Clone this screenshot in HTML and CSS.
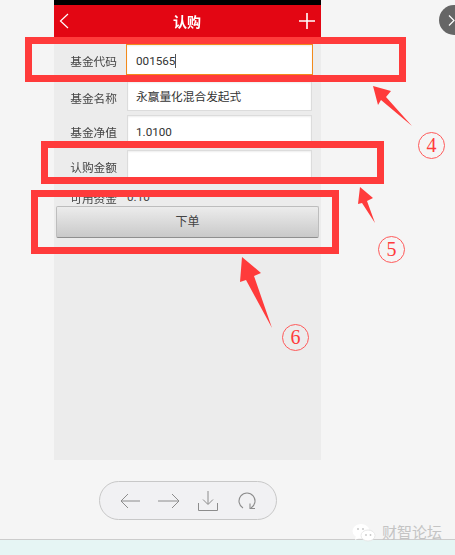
FILE: index.html
```html
<!DOCTYPE html>
<html lang="zh">
<head>
<meta charset="utf-8">
<title>认购</title>
<link rel="stylesheet" href="styles.css">
</head>
<body>
<main class="phone">
  <header class="topbar">
    <span class="bar-icon"><svg width="10" height="16" viewBox="0 0 10 16"><path d="M9 1L1.500 8L9 15" fill="none" stroke="#fff" stroke-width="1.200"/></svg></span>
    <h1 class="title">认购</h1>
    <span class="bar-icon"><svg width="16" height="16" viewBox="0 0 16 16"><path d="M8 0V16M0 8H16" stroke="#fff" stroke-width="1.600"/></svg></span>
  </header>
  <form class="form">
    <div class="row first"><span class="label">基金代码</span><div class="field focus">001565<i class="caret"></i></div></div>
    <div class="row"><span class="label">基金名称</span><div class="field short">永赢量化混合发起式</div></div>
    <div class="row"><span class="label">基金净值</span><div class="field">1.0100</div></div>
    <div class="row"><span class="label">认购金额</span><div class="field"></div></div>
    <div class="row plain"><span class="label">可用资金</span><span class="value">0.10</span></div>
    <div class="submit">下单</div>
  </form>
</main>

<div class="toolbar">
  <svg width="20" height="18" viewBox="0 0 20 18"><path d="M20 9H1M8 2L1 9L8 16" fill="none" stroke="#8c8c8c" stroke-width="1"/></svg>
  <svg width="22" height="18" viewBox="0 0 22 18"><path d="M0 9H21M14 2L21 9L14 16" fill="none" stroke="#8c8c8c" stroke-width="1"/></svg>
  <svg width="20" height="20" viewBox="0 0 20 20"><path d="M10 0V13M5 8.500L10 13.500L15 8.500M.5 12V19.500H19.500V12" fill="none" stroke="#8c8c8c" stroke-width="1"/></svg>
  <svg class="reload" width="18" height="18" viewBox="0 0 18 18"><path d="M13 16A8 8 0 1 0 5 16M12 11.500V16.500H17" fill="none" stroke="#8c8c8c" stroke-width="1.100"/></svg>
</div>

<div class="bottom-strip"></div>
<div class="watermark">
  <svg width="24" height="20" viewBox="0 0 24 20"><ellipse cx="9" cy="8" rx="8.500" ry="7" fill="#fff"/><path d="M4 12L3 17L9 14Z" fill="#fff"/><ellipse cx="16" cy="12.500" rx="7" ry="5.500" fill="#fff" stroke="#e2e2e2" stroke-width=".8"/><circle cx="6" cy="6" r="1" fill="#c8c8c8"/><circle cx="11" cy="6" r="1" fill="#c8c8c8"/><circle cx="14" cy="12" r=".9" fill="#c8c8c8"/><circle cx="18.500" cy="12" r=".9" fill="#c8c8c8"/></svg>
  <span>财智论坛</span>
</div>

<div class="close"><svg width="7" height="11" viewBox="0 0 7 11"><path d="M1 .5L6 5.500L1 10.500" fill="none" stroke="#fff" stroke-width="1.200"/></svg></div>

<div class="mark mark-code"></div>
<div class="mark mark-amount"></div>
<div class="mark mark-submit"></div>
<svg class="arrows" width="455" height="555" viewBox="0 0 455 555">
  <path d="M373 86 L391 91 L386 97 L412 126 L381 100 L378 105Z" fill="#ff3b3b"/>
  <path d="M360 187 L373 198 L367 201 L375 223 L362 203 L358 204Z" fill="#ff3b3b"/>
  <path d="M242 257 L261 273 L254 276 L272 328 L246 280 L240 282Z" fill="#ff3b3b"/>
</svg>
<span class="num num4">4</span>
<span class="num num5">5</span>
<span class="num num6">6</span>
</body>
</html>
```
FILE: styles.css
```css
html, body { margin: 0; padding: 0; }
body {
  width: 455px;
  height: 555px;
  overflow: hidden;
  position: relative;
  background: #f5f5f5;
  font-family: Roboto, "Noto Sans CJK SC", "Liberation Sans", sans-serif;
}
.phone {
  width: 267px;
  height: 460px;
  margin-left: 54px;
  background: #ececec;
  border-top: 5px solid #000;
  box-sizing: border-box;
}
.topbar {
  height: 32px;
  background: #e30613;
  display: flex;
  align-items: center;
  justify-content: space-between;
  padding: 0 6px 0 5px;
  color: #fff;
}
.bar-icon { width: 16px; height: 16px; display: flex; }
.title { margin: 0; font-size: 14px; font-weight: 700; filter: blur(.3px); }
.form { display: flex; flex-direction: column; padding-top: 7px; }
.row {
  display: flex;
  align-items: center;
  margin-bottom: 4px;
  color: #444;
  font-size: 11.700px;
}
.first { margin-bottom: 6px; }
.label {
  width: 63px;
  padding-top: 2px;
  text-align: right;
  margin-right: 10px;
  flex: none;
  filter: blur(.3px);
}
.field {
  width: 185px;
  height: 31px;
  box-sizing: border-box;
  background: #fff;
  border: 1px solid #dcdcdc;
  padding-left: 8px;
  line-height: 32px;
  color: #333;
  box-shadow: inset 0 1px 2px #eee;
  white-space: nowrap;
}
.short { height: 30px; line-height: 31px; }
.focus {
  width: 187px;
  margin-left: -1px;
  padding-left: 9px;
  border-color: #f28a1c;
}
.caret { display: inline-block; width: 1px; height: 14px; background: #555; vertical-align: -3px; }
.plain { height: 16px; margin: 4px 0 0; }
.plain .label { padding-top: 0; }
.value { padding-top: 0; }
.submit {
  margin: 1px 0 0 2px;
  width: 263px;
  height: 32px;
  box-sizing: border-box;
  border: 1px solid #bdbdbd;
  border-bottom-color: #8f8f8f;
  border-radius: 2px;
  background: linear-gradient(#ececec, #c9c9c9);
  text-align: center;
  line-height: 30px;
  font-size: 12px;
  color: #444;
}
.toolbar {
  position: absolute;
  left: 99px;
  top: 481px;
  width: 178px;
  height: 39px;
  box-sizing: border-box;
  border: 1px solid #c8c8c8;
  border-radius: 20px;
  background: #f1f1f3;
  display: flex;
  align-items: center;
  gap: 18px;
  padding: 0 20px;
}
.reload { margin-left: 2px; }
.watermark {
  position: absolute;
  left: 352px;
  top: 523px;
  display: flex;
  align-items: center;
  gap: 6px;
  font-size: 15px;
  line-height: 20px;
  color: #c4c4c4;
}
.bottom-strip {
  position: absolute;
  left: 0;
  right: 0;
  top: 539px;
  bottom: 0;
  background: #e6f5f4;
  border-top: 1px solid #ccc;
}
.close {
  position: absolute;
  left: 439px;
  top: 5px;
  width: 30px;
  height: 30px;
  border-radius: 50%;
  background: #666;
  display: flex;
  align-items: center;
  padding-left: 9px;
  box-sizing: border-box;
}
.mark { position: absolute; box-sizing: border-box; border: 7px solid #ff3b3b; }
.mark-code { left: 25px; top: 37px; width: 381px; height: 45px; }
.mark-amount { left: 41px; top: 141px; width: 343px; height: 43px; }
.mark-submit { left: 31px; top: 190px; width: 308px; height: 64px; }
.arrows { position: absolute; left: 0; top: 0; }
.num {
  position: absolute;
  width: 27px;
  height: 27px;
  box-sizing: border-box;
  border: 1px solid #ff5a5a;
  border-radius: 50%;
  color: #ff3b3b;
  font-family: "Liberation Serif", serif;
  font-size: 20px;
  line-height: 25px;
  text-align: center;
}
.num4 { left: 418px; top: 132px; }
.num5 { left: 378px; top: 236px; }
.num6 { left: 282px; top: 324px; }
```
